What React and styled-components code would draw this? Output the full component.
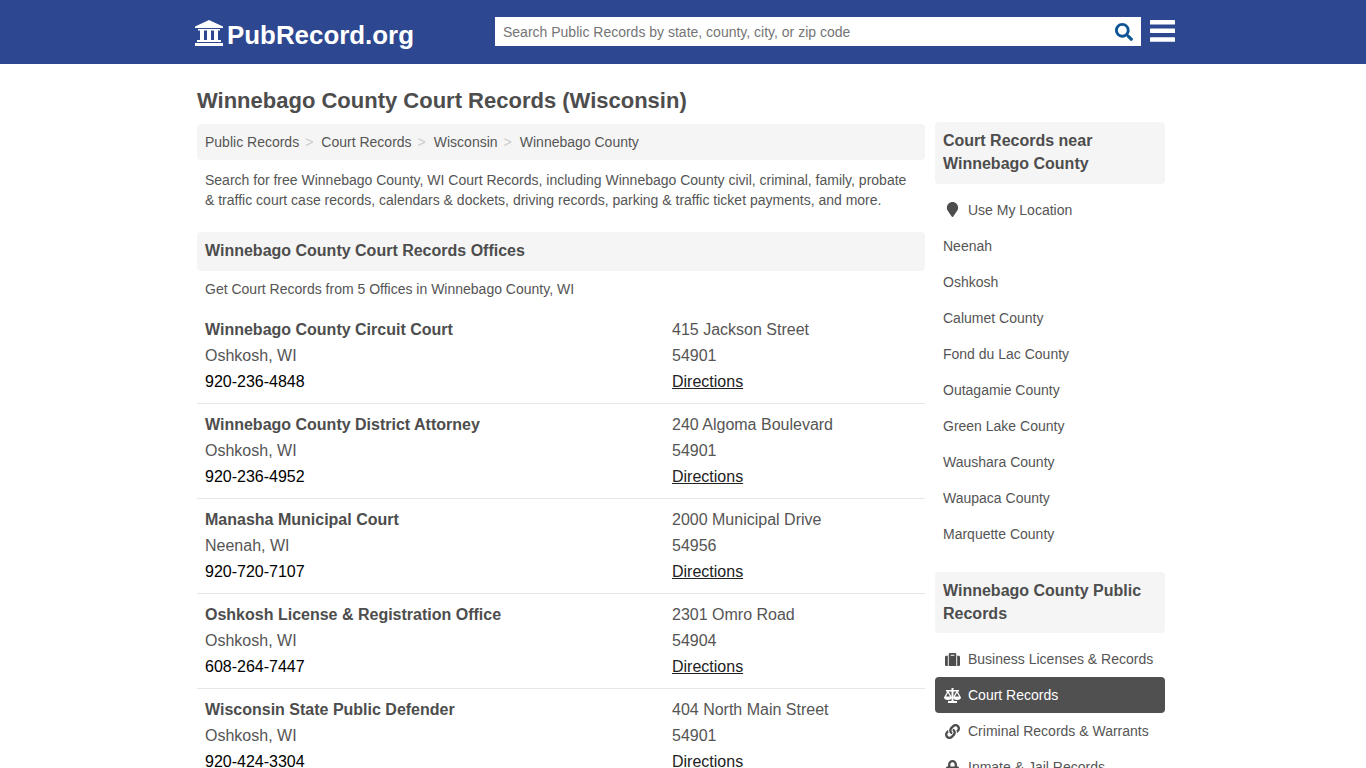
import React from 'react'
import styled, { createGlobalStyle } from 'styled-components'
import { FaSearch, FaMapMarker, FaSuitcase, FaLink, FaLock } from 'react-icons/fa'

const offices = [
    { name: 'Winnebago County Circuit Court', city: 'Oshkosh, WI', phone: '920-236-4848', street: '415 Jackson Street', zip: '54901' },
    { name: 'Winnebago County District Attorney', city: 'Oshkosh, WI', phone: '920-236-4952', street: '240 Algoma Boulevard', zip: '54901' },
    { name: 'Manasha Municipal Court', city: 'Neenah, WI', phone: '920-720-7107', street: '2000 Municipal Drive', zip: '54956' },
    { name: 'Oshkosh License & Registration Office', city: 'Oshkosh, WI', phone: '608-264-7447', street: '2301 Omro Road', zip: '54904' },
    { name: 'Wisconsin State Public Defender', city: 'Oshkosh, WI', phone: '920-424-3304', street: '404 North Main Street', zip: '54901' },
]

const nearby = ['Neenah', 'Oshkosh', 'Calumet County', 'Fond du Lac County', 'Outagamie County', 'Green Lake County', 'Waushara County', 'Waupaca County', 'Marquette County']

const crumbs = ['Public Records', 'Court Records', 'Wisconsin', 'Winnebago County']

const GlobalStyle = createGlobalStyle`
    html, body {
        margin: 0;
        height: 768px;
        overflow: hidden;
        background: #fff;
        font-family: "Liberation Sans", Arial, sans-serif;
        color: #555;
    }
    * { box-sizing: border-box; }
`

const Header = styled.header`
    height: 64px;
    background: #2d4890;
    display: flex;
    align-items: flex-start;
    padding-left: 195px;
`
const Logo = styled.a`
    display: flex;
    align-items: center;
    width: 300px;
    height: 30px;
    margin-top: 20px;
    color: #fff;
    font-size: 25.9px;
    font-weight: bold;
    svg { width: 28px; height: 26px; margin: 0 4px 4px 0; display: block; }
`
const Search = styled.div`
    width: 646px;
    height: 29px;
    margin-top: 17px;
    background: #fff;
    display: flex;
    align-items: center;
    justify-content: space-between;
    padding: 0 8px;
    font-size: 14px;
    color: #757575;
    svg { width: 18px; height: 18px; color: #0d5494; }
`
const Burger = styled.svg`
    width: 25px;
    height: 22px;
    margin: 20px 0 0 9px;
    display: block;
    fill: #fff;
`
const Page = styled.div`
    width: 968px;
    margin-left: 197px;
`
const Title = styled.h1`
    margin: 0;
    padding-top: 23px;
    height: 58px;
    font-size: 22px;
    line-height: 27px;
    font-weight: bold;
    color: #4d4d4d;
`
const Columns = styled.div`
    display: flex;
    gap: 10px;
    align-items: flex-start;
`
const Main = styled.main`
    width: 728px;
    margin-top: 2px;
`
const Breadcrumb = styled.div`
    height: 36px;
    background: #f5f5f5;
    border-radius: 4px;
    padding: 0 8px;
    display: flex;
    align-items: center;
    font-size: 14px;
`
const Sep = styled.span`
    color: #ccc;
    padding: 0 8px 0 6px;
`
const Intro = styled.p`
    margin: 10px 0 22px;
    padding: 0 8px;
    font-size: 14px;
    line-height: 20px;
`
const SectionHead = styled.h2`
    margin: 0;
    height: 39px;
    padding: 0 8px;
    background: #f5f5f5;
    border-radius: 4px;
    font-size: 16px;
    line-height: 37px;
    font-weight: bold;
    color: #4d4d4d;
`
const Count = styled.p`
    margin: 8px 0 10px;
    padding: 0 8px;
    font-size: 14px;
    line-height: 20px;
`
const Office = styled.div`
    display: grid;
    grid-template-columns: 467px 1fr;
    padding: 8px 8px 8px;
    font-size: 16px;
    line-height: 26px;
    border-bottom: 1px solid #e7e7e7;
    &:last-child { border-bottom: 0; }
`
const Name = styled.div`
    font-weight: bold;
    color: #4d4d4d;
`
const Phone = styled.div`
    color: #000;
`
const Directions = styled.a`
    display: block;
    color: #222;
    text-decoration: underline;
`
const Side = styled.aside`
    width: 230px;
`
const SideHead = styled.h3`
    margin: 0 0 8px;
    padding: 8px 8px 8px;
    background: #f5f5f5;
    border-radius: 4px;
    font-size: 16px;
    line-height: 22.85px;
    font-weight: bold;
    color: #4d4d4d;
`
const SideList = styled.div`
    margin-bottom: 20px;
`
const SideItem = styled.a`
    display: flex;
    align-items: center;
    height: 36px;
    padding: 0 8px;
    border-radius: 4px;
    font-size: 14px;
    color: ${p => (p.$active ? '#fff' : '#555')};
    background: ${p => (p.$active ? '#505050' : 'transparent')};
`
const ItemIcon = styled.span`
    width: 25px;
    display: flex;
    justify-content: center;
    padding-right: 7px;
    color: ${p => (p.$active ? '#fff' : '#4d4d4d')};
    svg { width: 17px; height: 15px; display: block; }
`

function CourthouseIcon() {
    return (
        <svg viewBox="0 0 28 26" fill="#fff">
            <path d="M14 0 L28 6.5 V8 H0 V6.5 Z" />
            <rect x="3" y="9" width="22" height="1.5" />
            <rect x="5" y="10" width="4" height="10" />
            <rect x="12" y="10" width="4" height="10" />
            <rect x="19" y="10" width="4" height="10" />
            <rect x="2" y="20" width="24" height="2" />
            <rect x="0" y="23" width="28" height="3" />
        </svg>
    )
}

function ScaleIcon() {
    return (
        <svg viewBox="0 0 17 15" fill="#fff">
            <rect x="7.5" y="0" width="2" height="13" />
            <rect x="2" y="2" width="13" height="1.6" />
            <rect x="4" y="13" width="9" height="2" />
            <path d="M4 3.6 L1 9 H7 Z M13 3.6 L10 9 H16 Z" fill="none" stroke="#fff" strokeWidth="1.2" />
            <path d="M0 9 H8 A4 3 0 0 1 0 9 Z M9 9 H17 A4 3 0 0 1 9 9 Z" />
        </svg>
    )
}

function App() {
    return (
        <>
            <GlobalStyle />
            <Header>
                <Logo><CourthouseIcon />PubRecord.org</Logo>
                <Search>
                    <span>Search Public Records by state, county, city, or zip code</span>
                    <FaSearch />
                </Search>
                <Burger viewBox="0 0 25 22">
                    <rect width="25" height="4.4" rx="0.5" />
                    <rect y="8.4" width="25" height="4.6" rx="0.5" />
                    <rect y="17.2" width="25" height="4.6" rx="0.5" />
                </Burger>
            </Header>
            <Page>
                <Title>Winnebago County Court Records (Wisconsin)</Title>
                <Columns>
                    <Main>
                        <Breadcrumb>
                            {crumbs.map((c, i) => (
                                <React.Fragment key={c}>
                                    <span>{c}</span>
                                    {i < crumbs.length - 1 && <Sep>&gt;</Sep>}
                                </React.Fragment>
                            ))}
                        </Breadcrumb>
                        <Intro>
                            Search for free Winnebago County, WI Court Records, including Winnebago County civil, criminal, family, probate &amp; traffic court case records, calendars &amp; dockets, driving records, parking &amp; traffic ticket payments, and more.
                        </Intro>
                        <SectionHead>Winnebago County Court Records Offices</SectionHead>
                        <Count>Get Court Records from 5 Offices in Winnebago County, WI</Count>
                        {offices.map(o => (
                            <Office key={o.name}>
                                <div>
                                    <Name>{o.name}</Name>
                                    <div>{o.city}</div>
                                    <Phone>{o.phone}</Phone>
                                </div>
                                <div>
                                    <div>{o.street}</div>
                                    <div>{o.zip}</div>
                                    <Directions>Directions</Directions>
                                </div>
                            </Office>
                        ))}
                    </Main>
                    <Side>
                        <SideHead>Court Records near Winnebago County</SideHead>
                        <SideList>
                            <SideItem><ItemIcon><FaMapMarker /></ItemIcon>Use My Location</SideItem>
                            {nearby.map(n => <SideItem key={n}>{n}</SideItem>)}
                        </SideList>
                        <SideHead>Winnebago County Public Records</SideHead>
                        <SideList>
                            <SideItem><ItemIcon><FaSuitcase /></ItemIcon>Business Licenses &amp; Records</SideItem>
                            <SideItem $active><ItemIcon $active><ScaleIcon /></ItemIcon>Court Records</SideItem>
                            <SideItem><ItemIcon><FaLink /></ItemIcon>Criminal Records &amp; Warrants</SideItem>
                            <SideItem><ItemIcon><FaLock /></ItemIcon>Inmate &amp; Jail Records</SideItem>
                        </SideList>
                    </Side>
                </Columns>
            </Page>
        </>
    )
}

export default App
